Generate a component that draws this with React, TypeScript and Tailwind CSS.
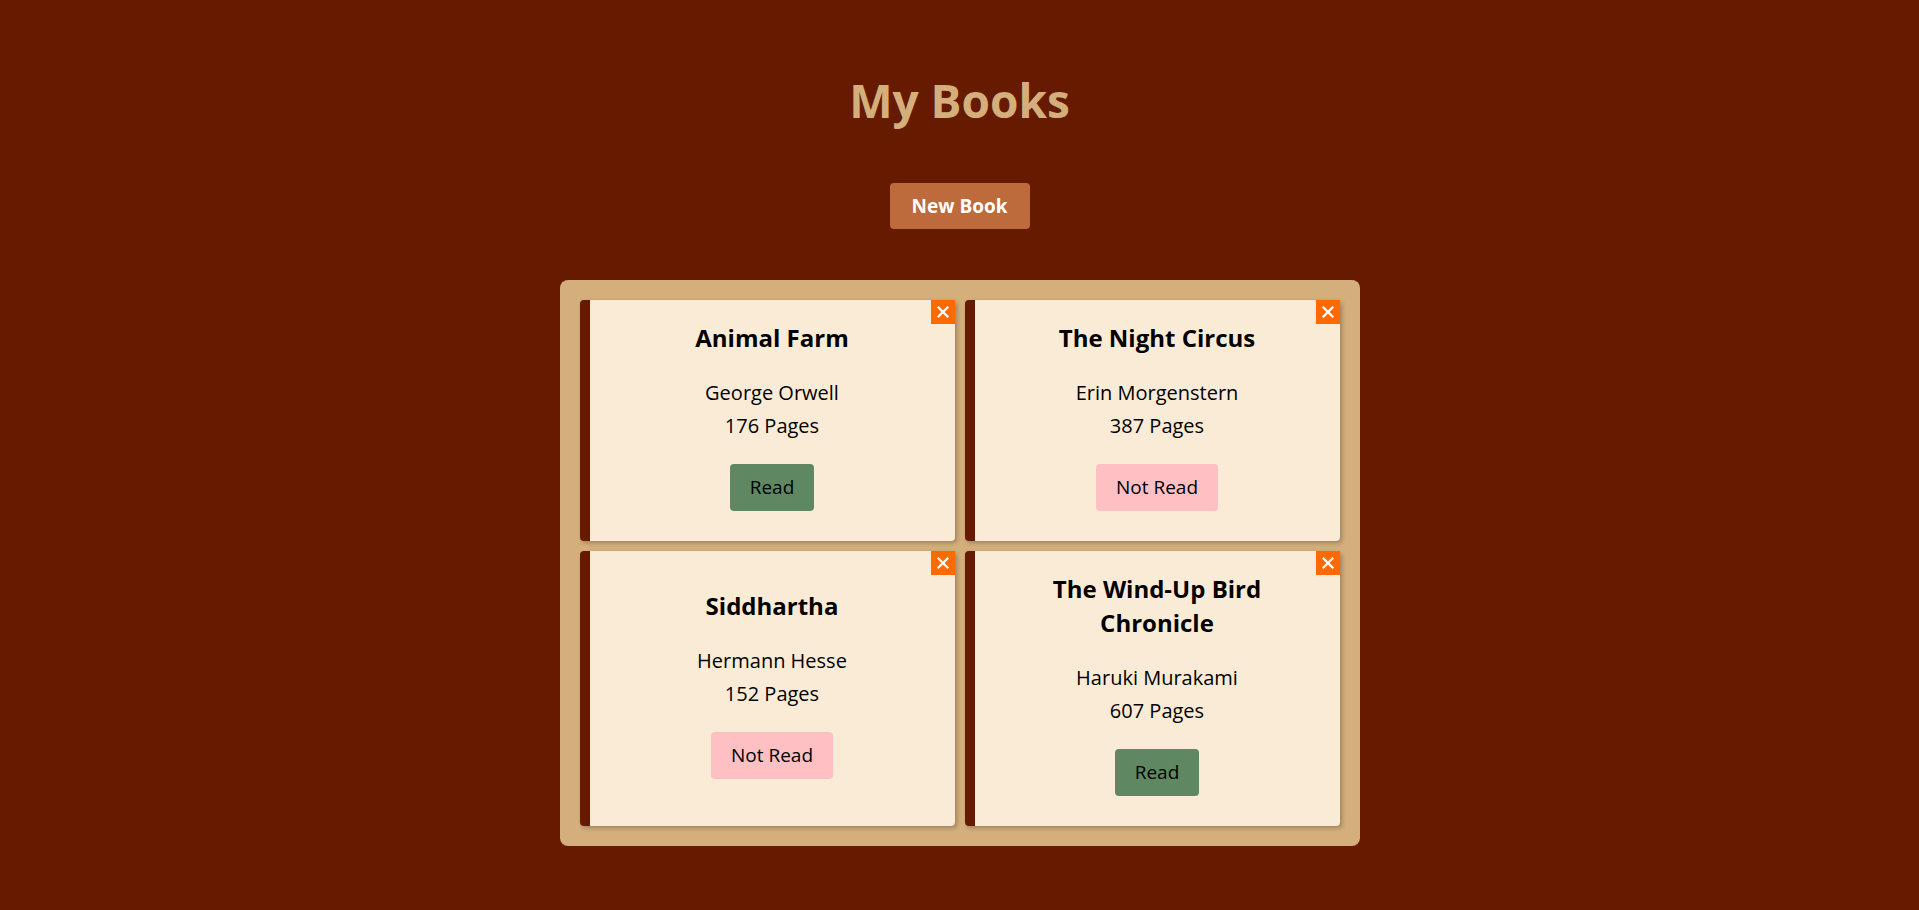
import React from "react";

type Book = { title: string; author: string; pages: number; read: boolean };

const books: Book[] = [
  { title: "Animal Farm", author: "George Orwell", pages: 176, read: true },
  { title: "The Night Circus", author: "Erin Morgenstern", pages: 387, read: false },
  { title: "Siddhartha", author: "Hermann Hesse", pages: 152, read: false },
  { title: "The Wind-Up Bird Chronicle", author: "Haruki Murakami", pages: 607, read: true },
];

function Card({ book }: { book: Book }) {
  return (
    <div className="relative flex flex-col items-center justify-center rounded-[4px] border-l-[10px] border-[#661a00] bg-[#faebd7] px-[20px] pt-[21px] pb-[30px] text-center text-black shadow-[2px_2px_4px_rgba(0,0,0,0.25)]">
      <button
        aria-label="Remove"
        className="absolute top-0 right-0 flex h-6 w-6 items-center justify-center bg-[#ff6a00]"
      >
        <svg width="24" height="24" viewBox="0 0 24 24">
          <path d="M7.5 7.5 L16.5 16.5 M16.5 7.5 L7.5 16.5" stroke="white" strokeWidth="2.2" strokeLinecap="square" />
        </svg>
      </button>
      <h2 className="max-w-[250px] text-[24px] leading-[34px] font-bold">{book.title}</h2>
      <p className="mt-[24px] text-[20px] leading-[28px]">{book.author}</p>
      <p className="mt-[5px] text-[20px] leading-[28px]">{book.pages} Pages</p>
      <button
        className={
          book.read
            ? "mt-[24px] h-[47px] rounded-[4px] bg-[#5f8862] px-[20px] text-[19px] text-black"
            : "mt-[24px] h-[47px] rounded-[4px] bg-[#ffc0c4] px-[20px] text-[19px] text-black"
        }
      >
        {book.read ? "Read" : "Not Read"}
      </button>
    </div>
  );
}

export default function App() {
  return (
    <div className="flex min-h-screen flex-col items-center bg-[#661a00] font-['Comic_Sans_MS','Open_Sans',sans-serif]">
      <h1 className="mt-[67px] text-[46px] leading-[67px] font-bold text-[#d4ae7b]">My Books</h1>
      <button className="mt-[49px] h-[46px] w-[140px] rounded-[4px] bg-[#bd6a3c] text-[19px] font-bold text-white">
        New Book
      </button>
      <div className="mt-[51px] mb-[60px] grid w-[800px] grid-cols-2 gap-[10px] rounded-[8px] bg-[#d4ae7b] p-[20px]">
        {books.map((b) => (
          <Card key={b.title} book={b} />
        ))}
      </div>
    </div>
  );
}
